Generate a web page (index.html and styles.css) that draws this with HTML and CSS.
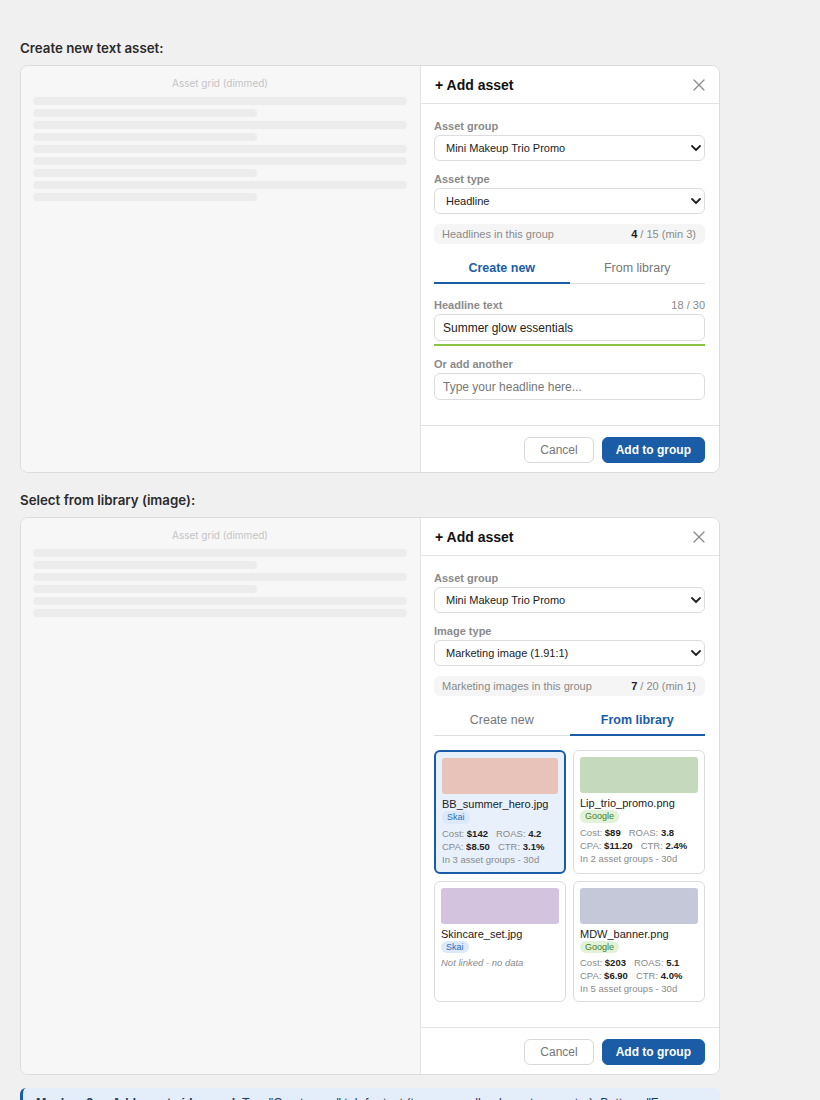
FILE: index.html
```html
<!DOCTYPE html>
<html lang="en">
<head>
<meta charset="utf-8">
<title>Add asset panel</title>
<link rel="stylesheet" href="styles.css">
</head>
<body>
<main class="page">

  <section class="mock">
    <h2 class="mock-title">Create new text asset:</h2>
    <div class="frame">
      <div class="grid-dim">
        <div class="dim-label">Asset grid (dimmed)</div>
        <div class="dim-bars">
          <span class="bar"></span>
          <span class="bar short"></span>
          <span class="bar"></span>
          <span class="bar short"></span>
          <span class="bar"></span>
          <span class="bar"></span>
          <span class="bar short"></span>
          <span class="bar"></span>
          <span class="bar short"></span>
        </div>
      </div>
      <aside class="panel">
        <header class="panel-head">
          <h3 class="panel-title">+ Add asset</h3>
          <svg class="close-icon" viewBox="0 0 12 12" width="12" height="12"><path d="M1 1l10 10M11 1L1 11" stroke="#8a8a8a" stroke-width="1.3" stroke-linecap="round"/></svg>
        </header>
        <div class="panel-body">
          <div class="field">
            <div class="field-label">Asset group</div>
            <div class="select"><span>Mini Makeup Trio Promo</span><svg class="chev" viewBox="0 0 10 6" width="10" height="6"><path d="M1 1l4 4 4-4" fill="none" stroke="#222" stroke-width="1.8" stroke-linecap="round" stroke-linejoin="round"/></svg></div>
          </div>
          <div class="field">
            <div class="field-label">Asset type</div>
            <div class="select"><span>Headline</span><svg class="chev" viewBox="0 0 10 6" width="10" height="6"><path d="M1 1l4 4 4-4" fill="none" stroke="#222" stroke-width="1.8" stroke-linecap="round" stroke-linejoin="round"/></svg></div>
          </div>
          <div class="count-row"><span>Headlines in this group</span><span><b>4</b> / 15 (min 3)</span></div>
          <div class="tabs">
            <span class="tab active">Create new</span>
            <span class="tab">From library</span>
          </div>
          <div class="tab-content">
            <div class="field-head"><span class="field-label">Headline text</span><span class="char-count">18 / 30</span></div>
            <input class="text-input" type="text" value="Summer glow essentials">
            <div class="meter"></div>
            <div class="field-label spaced">Or add another</div>
            <input class="text-input" type="text" placeholder="Type your headline here...">
          </div>
        </div>
        <footer class="panel-foot">
          <button class="btn">Cancel</button>
          <button class="btn primary">Add to group</button>
        </footer>
      </aside>
    </div>
  </section>

  <section class="mock">
    <h2 class="mock-title">Select from library (image):</h2>
    <div class="frame">
      <div class="grid-dim">
        <div class="dim-label">Asset grid (dimmed)</div>
        <div class="dim-bars">
          <span class="bar"></span>
          <span class="bar short"></span>
          <span class="bar"></span>
          <span class="bar short"></span>
          <span class="bar"></span>
          <span class="bar"></span>
        </div>
      </div>
      <aside class="panel">
        <header class="panel-head">
          <h3 class="panel-title">+ Add asset</h3>
          <svg class="close-icon" viewBox="0 0 12 12" width="12" height="12"><path d="M1 1l10 10M11 1L1 11" stroke="#8a8a8a" stroke-width="1.3" stroke-linecap="round"/></svg>
        </header>
        <div class="panel-body">
          <div class="field">
            <div class="field-label">Asset group</div>
            <div class="select"><span>Mini Makeup Trio Promo</span><svg class="chev" viewBox="0 0 10 6" width="10" height="6"><path d="M1 1l4 4 4-4" fill="none" stroke="#222" stroke-width="1.8" stroke-linecap="round" stroke-linejoin="round"/></svg></div>
          </div>
          <div class="field">
            <div class="field-label">Image type</div>
            <div class="select"><span>Marketing image (1.91:1)</span><svg class="chev" viewBox="0 0 10 6" width="10" height="6"><path d="M1 1l4 4 4-4" fill="none" stroke="#222" stroke-width="1.8" stroke-linecap="round" stroke-linejoin="round"/></svg></div>
          </div>
          <div class="count-row"><span>Marketing images in this group</span><span><b>7</b> / 20 (min 1)</span></div>
          <div class="tabs">
            <span class="tab">Create new</span>
            <span class="tab active">From library</span>
          </div>
          <div class="tab-content library">
            <div class="card selected">
              <div class="thumb thumb-peach"></div>
              <div class="card-name">BB_summer_hero.jpg</div>
              <span class="badge skai">Skai</span>
              <div class="stats">
                <div class="stat-line"><span>Cost: <b>$142</b></span><span>ROAS: <b>4.2</b></span></div>
                <div class="stat-line"><span>CPA: <b>$8.50</b></span><span>CTR: <b>3.1%</b></span></div>
                <div class="stat-line">In 3 asset groups - 30d</div>
              </div>
            </div>
            <div class="card">
              <div class="thumb thumb-sage"></div>
              <div class="card-name">Lip_trio_promo.png</div>
              <span class="badge google">Google</span>
              <div class="stats">
                <div class="stat-line"><span>Cost: <b>$89</b></span><span>ROAS: <b>3.8</b></span></div>
                <div class="stat-line"><span>CPA: <b>$11.20</b></span><span>CTR: <b>2.4%</b></span></div>
                <div class="stat-line">In 2 asset groups - 30d</div>
              </div>
            </div>
            <div class="card">
              <div class="thumb thumb-lilac"></div>
              <div class="card-name">Skincare_set.jpg</div>
              <span class="badge skai">Skai</span>
              <div class="stats">
                <div class="stat-line empty">Not linked - no data</div>
              </div>
            </div>
            <div class="card">
              <div class="thumb thumb-slate"></div>
              <div class="card-name">MDW_banner.png</div>
              <span class="badge google">Google</span>
              <div class="stats">
                <div class="stat-line"><span>Cost: <b>$203</b></span><span>ROAS: <b>5.1</b></span></div>
                <div class="stat-line"><span>CPA: <b>$6.90</b></span><span>CTR: <b>4.0%</b></span></div>
                <div class="stat-line">In 5 asset groups - 30d</div>
              </div>
            </div>
          </div>
        </div>
        <footer class="panel-foot">
          <button class="btn">Cancel</button>
          <button class="btn primary">Add to group</button>
        </footer>
      </aside>
    </div>
  </section>

  <p class="note"><b>Mockup 2 — Add asset side panel.</b> Top: "Create new" tab for text (type manually, character counter). Bottom: "From library" tab for images — pick existing assets with Skai and Google performance data before adding them to the group.</p>

</main>
</body>
</html>
```

FILE: styles.css
```css
* {
  box-sizing: border-box;
}

html,
body {
  margin: 0;
}

body {
  background: #f0f0f0;
  font-family: "Liberation Sans", Arial, sans-serif;
  color: #222;
}

.page {
  width: 700px;
  margin-left: 20px;
  padding-top: 41px;
}

.mock + .mock {
  margin-top: 20px;
}

.mock-title {
  margin: 0 0 9px;
  font-family: Inter, "Liberation Sans", sans-serif;
  font-size: 13.3px;
  font-weight: 600;
  line-height: 15px;
  color: #2b2b2b;
}

/* two-column frame: dimmed grid + side panel */
.frame {
  display: flex;
  border: 1px solid #dcdcdc;
  border-radius: 8px;
  overflow: hidden;
  background: #fff;
}

.grid-dim {
  flex: none;
  width: 399px;
  background: #f7f7f7;
  padding: 11px 13px 0 12px;
}

.dim-label {
  margin-bottom: 7px;
  font-family: Inter, "Liberation Sans", sans-serif;
  font-size: 10px;
  line-height: 13px;
  color: #c4c4c4;
  text-align: center;
}

.dim-bars {
  display: flex;
  flex-direction: column;
  gap: 4px;
}

.bar {
  display: block;
  height: 8px;
  border-radius: 4px;
  background: #ececec;
}

.bar.short {
  width: 60%;
}

/* side panel */
.panel {
  flex: 1;
  display: flex;
  flex-direction: column;
  border-left: 1px solid #e2e2e2;
  background: #fff;
}

.panel-head {
  display: flex;
  align-items: center;
  justify-content: space-between;
  padding: 11px 14px 10px 14px;
  border-bottom: 1px solid #e2e2e2;
}

.panel-title {
  margin: 0;
  font-size: 14px;
  font-weight: 700;
  line-height: 16px;
  color: #111;
}

.close-icon {
  display: block;
}

.panel-body {
  flex: 1;
  padding: 15px 14px 25px 13px;
}

.field + .field {
  margin-top: 11px;
}

.field-label {
  margin-bottom: 2px;
  font-size: 11px;
  font-weight: 700;
  line-height: 14px;
  color: #8a8a8a;
}

.field-label.spaced {
  margin-top: 11px;
}

.select {
  display: flex;
  align-items: center;
  justify-content: space-between;
  height: 26px;
  padding: 0 3px 0 11px;
  border: 1px solid #dcdcdc;
  border-radius: 6px;
  background: #fff;
  font-size: 11px;
  color: #222;
}

.chev {
  display: block;
}

.count-row {
  display: flex;
  align-items: center;
  justify-content: space-between;
  height: 20px;
  margin-top: 10px;
  padding: 0 9px 0 8px;
  border-radius: 6px;
  background: #f5f5f5;
  font-size: 11px;
  color: #8a8a8a;
}

.count-row b {
  color: #222;
}

/* tabs */
.tabs {
  display: flex;
  margin-top: 10px;
  border-bottom: 1px solid #dedede;
}

.tab {
  flex: 1;
  margin-bottom: -1px;
  padding: 7px 0 6px;
  border-bottom: 2px solid transparent;
  font-size: 12.5px;
  line-height: 15px;
  color: #777;
  text-align: center;
}

.tab.active {
  border-bottom-color: #1a5da6;
  color: #1a5da6;
  font-weight: 700;
}

.tab-content {
  margin-top: 14px;
}

.field-head {
  display: flex;
  justify-content: space-between;
  margin-bottom: 2px;
}

.field-head .field-label {
  margin-bottom: 0;
}

.char-count {
  font-size: 11px;
  line-height: 14px;
  color: #8a8a8a;
}

.text-input {
  display: block;
  width: 100%;
  height: 27px;
  margin: 2px 0 0;
  padding: 0 8px;
  border: 1px solid #dcdcdc;
  border-radius: 6px;
  background: #fff;
  font-family: "Liberation Sans", Arial, sans-serif;
  font-size: 12px;
  color: #222;
  outline: none;
}

.text-input::placeholder {
  color: #777;
}

.meter {
  height: 2px;
  margin-top: 3px;
  background: #8bc34a;
}

/* library cards */
.library {
  display: grid;
  grid-template-columns: 1fr 1fr;
  gap: 7px;
}

.card {
  padding: 6px;
  border: 1px solid #dcdcdc;
  border-radius: 6px;
  background: #fff;
}

.card.selected {
  border: 2px solid #1a5da6;
  background: #e7f0fb;
}

.thumb {
  height: 36px;
  border-radius: 3px;
}

.thumb-peach { background: #e8c3b9; }
.thumb-sage { background: #c5d9bc; }
.thumb-lilac { background: #d4c3de; }
.thumb-slate { background: #c4c8d9; }

.card-name {
  margin-top: 4px;
  font-size: 11px;
  line-height: 13px;
  color: #222;
}

.badge {
  display: block;
  width: fit-content;
  padding: 0 5px;
  border-radius: 6px;
  font-size: 9px;
  line-height: 12.5px;
}

.badge.skai {
  background: #dbe9fa;
  color: #2c6db4;
}

.badge.google {
  background: #e2f2d9;
  color: #3f7d2a;
}

.stats {
  margin-top: 3px;
  font-size: 9.5px;
  line-height: 13px;
  color: #8a8a8a;
}

.stat-line {
  display: flex;
  gap: 8px;
  white-space: nowrap;
}

.stat-line b {
  color: #222;
}

.stat-line.empty {
  font-style: italic;
}

/* footer buttons */
.panel-foot {
  display: flex;
  justify-content: flex-end;
  gap: 8px;
  padding: 11px 14px 9px;
  border-top: 1px solid #e2e2e2;
}

.btn {
  height: 26px;
  padding: 0 15px;
  border: 1px solid #d8d8d8;
  border-radius: 6px;
  background: #fff;
  font-family: "Liberation Sans", Arial, sans-serif;
  font-size: 12px;
  color: #777;
}

.btn.primary {
  padding: 0 13px;
  border-color: #1a5da6;
  background: #1a5da6;
  color: #fff;
  font-weight: 700;
}

/* footnote */
.note {
  margin: 13px 0 0;
  padding: 7px 14px 8px 13px;
  border-left: 3px solid #1a5da6;
  border-radius: 6px;
  background: #e4eefa;
  font-size: 12.4px;
  line-height: 16px;
  color: #1e3a5f;
}
```
